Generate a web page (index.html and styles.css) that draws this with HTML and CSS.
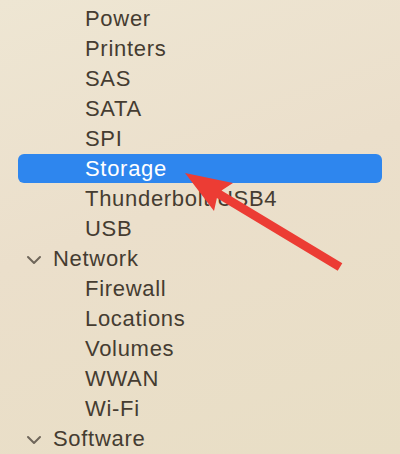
FILE: index.html
```html
<!DOCTYPE html>
<html>
<head>
<meta charset="utf-8">
<link rel="stylesheet" href="styles.css">
</head>
<body>
<div class="sidebar">
  <ul class="tree">
    <li class="row child">Power</li>
    <li class="row child">Printers</li>
    <li class="row child">SAS</li>
    <li class="row child">SATA</li>
    <li class="row child">SPI</li>
    <li class="row child selected">Storage</li>
    <li class="row child">Thunderbolt/USB4</li>
    <li class="row child">USB</li>
    <li class="row group"><svg class="chev" width="16" height="10" viewBox="0 0 16 10"><path d="M2 2 L8 8 L14 2" fill="none" stroke="currentColor" stroke-width="2" stroke-linecap="round" stroke-linejoin="round"/></svg><span>Network</span></li>
    <li class="row child">Firewall</li>
    <li class="row child">Locations</li>
    <li class="row child">Volumes</li>
    <li class="row child">WWAN</li>
    <li class="row child">Wi-Fi</li>
    <li class="row group"><svg class="chev" width="16" height="10" viewBox="0 0 16 10"><path d="M2 2 L8 8 L14 2" fill="none" stroke="currentColor" stroke-width="2" stroke-linecap="round" stroke-linejoin="round"/></svg><span>Software</span></li>
  </ul>
  <svg class="arrow" width="400" height="454" viewBox="0 0 400 454">
    <polygon points="185,173 233,183 221.5,190.5 342.3,263.2 337.7,270.8 216.9,198 214,211" fill="#ec3c34"/>
  </svg>
</div>
</body>
</html>
```
FILE: styles.css
```css
html, body {
  margin: 0;
  padding: 0;
}
body {
  width: 400px;
  height: 454px;
  overflow: hidden;
  background: linear-gradient(160deg, #eee6d3 0%, #ebdfcb 45%, #e8dec5 100%);
  font-family: "Liberation Sans", Arial, sans-serif;
}
.sidebar {
  position: relative;
  width: 400px;
  height: 454px;
}
.tree {
  list-style: none;
  margin: 0;
  padding: 4px 0 0 0;
  display: flex;
  flex-direction: column;
  gap: 1px;
}
.row {
  height: 29px;
  line-height: 29px;
  margin: 0 18px;
  border-radius: 6px;
  font-size: 22px;
  letter-spacing: 0.7px;
  color: #453c31;
  white-space: nowrap;
}
.child {
  padding-left: 67px;
}
.group {
  display: flex;
  align-items: center;
  padding-left: 8px;
  gap: 11px;
}
.chev {
  color: #6f665a;
  flex: none;
  margin-top: 2px;
}
.selected {
  background: #2e86ee;
  color: #ffffff;
}
.arrow {
  position: absolute;
  left: 0;
  top: 0;
  pointer-events: none;
}
```
